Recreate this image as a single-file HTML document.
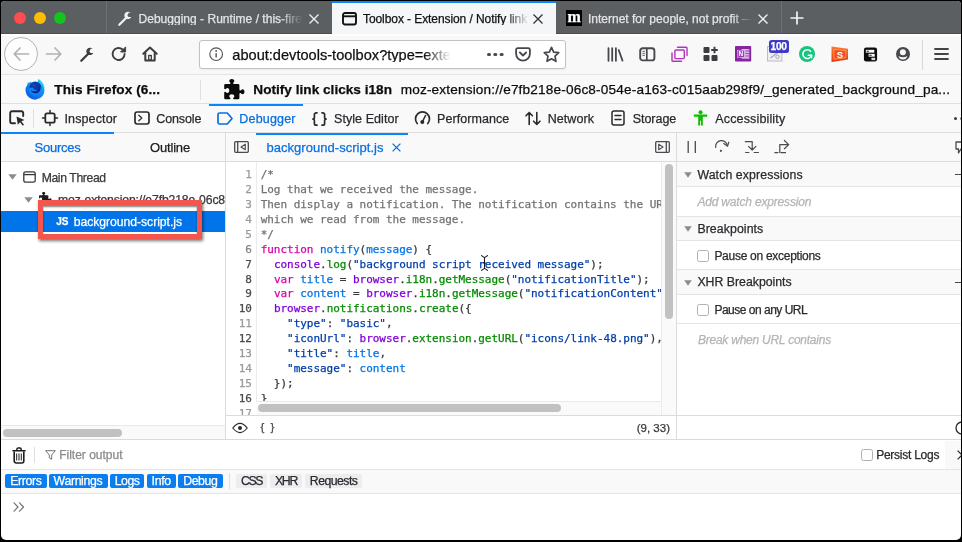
<!DOCTYPE html><html lang="en"><head>
<meta charset="utf-8">
<title>Toolbox - Extension / Notify link clicks i18n</title>
<style>
*{box-sizing:border-box;margin:0;padding:0}
html,body{width:962px;height:542px;overflow:hidden;background:#000}
body{font-family:"Liberation Sans","DejaVu Sans",sans-serif;font-size:12px;color:#222;position:relative}
.a{position:absolute}
.t{position:absolute;white-space:nowrap;line-height:1;-webkit-text-stroke:0.250px}
#win{position:absolute;left:1.200px;top:1px;width:959.400px;height:539.400px;background:#fff;overflow:hidden;border-radius:4px 4px 5px 5px}
/* all children positioned in window coordinates (offset -1,-1 from page) */
#w{position:absolute;left:-1.200px;top:-1px;width:962px;height:542px;will-change:transform}
svg{position:absolute;overflow:visible}
.mono{font-family:"DejaVu Sans Mono","Liberation Mono",monospace}
</style>
</head>
<body>
<div id="win"><div id="w">

<!-- ============ TAB BAR ============ -->
<div class="a" id="tabbar" style="left:0;top:0;width:962px;height:34px;background:#5b5f62"></div>
<div class="a" style="left:14.200px;top:12px;width:12.200px;height:12.200px;border-radius:50%;background:#fc4e50"></div>
<div class="a" style="left:34.200px;top:12px;width:12.200px;height:12.200px;border-radius:50%;background:#fdbc08"></div>
<div class="a" style="left:54.200px;top:12px;width:12.200px;height:12.200px;border-radius:50%;background:#12c41d"></div>
<div class="a" style="left:106px;top:1px;width:1px;height:33px;background:#6f7276"></div>
<!-- tab 1 -->
<svg style="left:116.500px;top:11px" width="16" height="16" viewBox="0 0 16 16"><path d="M2.300 13.700L9.300 6.700" stroke="#f0f0f1" stroke-width="2.300" stroke-linecap="round"></path><path d="M13.400 1.600A3.700 3.700 0 1 0 14.500 5.600L11.800 5.900L10.300 4.300L11.500 1.500z" fill="#f0f0f1" transform="rotate(8 11 4.500)"></path></svg>
<div class="t" id="tab1t" style="left:138.500px;top:13px;font-size:12px;letter-spacing:0.020px;color:#e4e4e6;width:164px;overflow:hidden;-webkit-mask-image:linear-gradient(90deg,#000 86%,transparent 100%)">Debugging - Runtime / this-firefox</div>
<svg style="left:309px;top:14px" width="10" height="10" viewBox="0 0 10 10"><path d="M0.500 0.500L9.500 9.500M9.500 0.500L0.500 9.500" stroke="#eee" stroke-width="1.4" fill="none"></path></svg>
<!-- active tab -->
<div class="a" style="left:332px;top:1px;width:224px;height:33px;background:#f5f6f7"></div>
<div class="a" style="left:332px;top:1px;width:224px;height:2px;background:#0a84ff"></div>
<svg style="left:341.500px;top:11.500px" width="15" height="14" viewBox="0 0 15 14"><rect x="1" y="1" width="13" height="11.500" rx="2" fill="none" stroke="#111" stroke-width="1.900"></rect><path d="M1 4.300H14" stroke="#111" stroke-width="1.900"></path></svg>
<div class="t" id="tab2t" style="left:363px;top:13px;font-size:12px;letter-spacing:-0.080px;color:#111;width:166px;overflow:hidden;-webkit-mask-image:linear-gradient(90deg,#000 86%,transparent 100%)">Toolbox - Extension / Notify link clicks</div>
<svg style="left:533px;top:14px" width="10" height="10" viewBox="0 0 10 10"><path d="M0.500 0.500L9.500 9.500M9.500 0.500L0.500 9.500" stroke="#333" stroke-width="1.300" fill="none"></path></svg>
<!-- tab 3 -->
<div class="a" style="left:566px;top:10px;width:16px;height:16px;background:#000"></div>
<div class="t" style="left:567.600px;top:9.300px;font-size:16px;font-weight:bold;color:#fff;font-family:'Liberation Serif','DejaVu Serif',serif">m</div>
<div class="t" id="tab3t" style="left:588px;top:13px;font-size:12px;letter-spacing:0px;color:#e4e4e6;width:164px;overflow:hidden;-webkit-mask-image:linear-gradient(90deg,#000 88%,transparent 100%)">Internet for people, not profit — Mozilla</div>
<svg style="left:758px;top:14px" width="10" height="10" viewBox="0 0 10 10"><path d="M0.500 0.500L9.500 9.500M9.500 0.500L0.500 9.500" stroke="#eee" stroke-width="1.400" fill="none"></path></svg>
<div class="a" style="left:781px;top:1px;width:1px;height:33px;background:#6f7276"></div>
<svg style="left:790px;top:11px" width="14" height="14" viewBox="0 0 14 14"><path d="M7 0.500V13.500M0.500 7H13.500" stroke="#f4f4f4" stroke-width="1.700" fill="none"></path></svg>

<!-- ============ NAV BAR ============ -->
<div class="a" style="left:0;top:33px;width:332px;height:1px;background:#4d5053"></div><div class="a" style="left:556px;top:33px;width:406px;height:1px;background:#4d5053"></div>
<div class="a" id="navbar" style="left:0;top:34px;width:962px;height:40px;background:#f8f8f9"></div>
<div class="a" style="left:0;top:34px;width:962px;height:1.500px;background:#fff"></div>
<div class="a" style="left:0;top:74px;width:962px;height:1px;background:#e3e3e4"></div>

<!-- ============ THIS FIREFOX BAR ============ -->
<div class="a" id="ffbar" style="left:0;top:75px;width:962px;height:29px;background:#f9f9fa"></div>

<!-- ============ DEVTOOLS TOOLBAR ============ -->
<div class="a" id="dtbar" style="left:0;top:103.400px;width:962px;height:28.600px;background:#f9f9fa;border-top:1px solid #e0e0e2"></div>
<div class="a" style="left:0;top:132px;width:962px;height:1px;background:#dcdcde"></div>

<!-- back button -->
<div class="a" style="left:4.200px;top:36.800px;width:33.800px;height:33.800px;border-radius:50%;background:#fdfdfd;border:1px solid #b4b4b7"></div>
<svg style="left:13px;top:47px" width="16" height="14" viewBox="0 0 16 14"><path d="M7 1L1.200 7L7 13M1.500 7H15.500" stroke="#b1b1b3" stroke-width="1.700" fill="none" stroke-linecap="round" stroke-linejoin="round"></path></svg>
<svg style="left:46px;top:47px" width="16" height="14" viewBox="0 0 16 14"><path d="M9 1L14.800 7L9 13M14.500 7H0.500" stroke="#b1b1b3" stroke-width="1.700" fill="none" stroke-linecap="round" stroke-linejoin="round"></path></svg>
<!-- wrench -->
<svg style="left:78.500px;top:46.500px" width="16" height="16" viewBox="0 0 16 16"><path d="M2.300 13.700L9.300 6.700" stroke="#3d3d40" stroke-width="2.300" stroke-linecap="round"></path><path d="M13.400 1.600A3.700 3.700 0 1 0 14.500 5.600L11.800 5.900L10.300 4.300L11.500 1.500z" fill="#3d3d40" transform="rotate(8 11 4.500)"></path></svg>
<!-- reload -->
<svg style="left:110.800px;top:46px" width="16" height="15" viewBox="0 0 16 15"><path d="M13.600 8A6 6 0 1 1 11.300 3.300" stroke="#3d3d40" stroke-width="1.900" fill="none" stroke-linecap="round"></path><path d="M14.600 0.900V6H9.500z" fill="#3d3d40" stroke="#3d3d40" stroke-width="0.900" stroke-linejoin="round"></path></svg>
<!-- home -->
<svg style="left:142.300px;top:45.800px" width="16" height="16" viewBox="0 0 16 16"><path d="M1.300 7.800L8 1.500L14.700 7.800" stroke="#3d3d40" stroke-width="2" fill="none" stroke-linecap="round" stroke-linejoin="round"></path><path d="M3.300 7V14.600H12.700V7" stroke="#3d3d40" stroke-width="2" fill="none" stroke-linecap="round" stroke-linejoin="round"></path><rect x="6.700" y="9.500" width="2.600" height="4.500" fill="none" stroke="#3d3d40" stroke-width="1.300"></rect></svg>
<!-- url bar -->
<div class="a" style="left:199px;top:39.500px;width:367px;height:29px;background:#fff;border:1px solid #c2c2c5;border-radius:3px;box-shadow:0 1px 2px rgba(0,0,0,.06)"></div>
<svg style="left:208.800px;top:47.300px" width="14.300" height="14.300" viewBox="0 0 14 14"><circle cx="7" cy="7" r="6.200" fill="none" stroke="#555" stroke-width="1.100"></circle><path d="M7 6V10.300" stroke="#555" stroke-width="1.400"></path><circle cx="7" cy="3.900" r="0.900" fill="#555"></circle></svg>
<div class="t" id="urlt" style="left:232.300px;top:47.800px;font-size:14.600px;color:#111;width:221px;overflow:hidden;-webkit-mask-image:linear-gradient(90deg,#000 87%,transparent 99%)">about:devtools-toolbox?type=extension</div>
<div class="a" style="left:487px;top:52.700px;width:3.600px;height:3.600px;border-radius:50%;background:#4a4a4f;box-shadow:6.300px 0 0 #4a4a4f,12.600px 0 0 #4a4a4f"></div>
<!-- pocket -->
<svg style="left:515px;top:46.800px" width="16" height="15" viewBox="0 0 16 15"><path d="M2.800 1.200H13.200A1.700 1.700 0 0 1 14.900 2.900V6.800A6.900 6.900 0 0 1 1.100 6.800V2.900A1.700 1.700 0 0 1 2.800 1.200z" fill="none" stroke="#48484c" stroke-width="1.800"></path><path d="M4.900 5.500L8 8.500L11.100 5.500" stroke="#48484c" stroke-width="1.800" fill="none" stroke-linecap="round" stroke-linejoin="round"></path></svg>
<!-- star -->
<svg style="left:542.700px;top:45.800px" width="17" height="17" viewBox="0 0 16 16"><path d="M8 1.300L10.050 5.700L14.800 6.300L11.300 9.600L12.200 14.400L8 12L3.800 14.400L4.700 9.600L1.200 6.300L5.950 5.700z" fill="none" stroke="#48484c" stroke-width="1.600" stroke-linejoin="round"></path></svg>
<!-- library -->
<svg style="left:607px;top:46.500px" width="17" height="15" viewBox="0 0 17 15"><path d="M1.500 1.200V13.800M5.200 1.200V13.800M8.900 1.200V13.800" stroke="#48484c" stroke-width="1.800" stroke-linecap="round"></path><path d="M11.700 3L15.500 13.600" stroke="#48484c" stroke-width="1.800" stroke-linecap="round"></path></svg>
<!-- sidebar -->
<svg style="left:638.500px;top:46.700px" width="17" height="15" viewBox="0 0 17 15"><rect x="1.200" y="1.200" width="14.200" height="12.200" rx="2.500" fill="none" stroke="#48484c" stroke-width="1.900"></rect><path d="M7.800 1.200V13.400" stroke="#48484c" stroke-width="1.700"></path><path d="M3.500 4.300H5.800M3.500 6.300H5.800M3.500 8.300H5.800" stroke="#48484c" stroke-width="0.900"></path></svg>
<!-- containers (purple) -->
<svg style="left:670.500px;top:46px" width="17" height="16" viewBox="0 0 17 16"><rect x="3.900" y="4" width="9.400" height="8.600" rx="1" fill="none" stroke="#b234bb" stroke-width="1.400"></rect><path d="M6.500 1.200H15.200A0.800 0.800 0 0 1 16 2V9.500" fill="none" stroke="#b234bb" stroke-width="1.400" stroke-linecap="round"></path><path d="M1 7V14.400A0.800 0.800 0 0 0 1.800 15.200H10.500" fill="none" stroke="#b234bb" stroke-width="1.400" stroke-linecap="round"></path></svg>
<!-- grid + -->
<svg style="left:703px;top:46px" width="16" height="16" viewBox="0 0 16 16"><rect x="0.500" y="1" width="6" height="6" rx="1" fill="#3d3d40"></rect><rect x="0.500" y="9" width="6" height="6" rx="1" fill="#3d3d40"></rect><rect x="8.500" y="9" width="6" height="6" rx="1" fill="#3d3d40"></rect><path d="M11.500 0.700V7.300M8.200 4H14.800" stroke="#3d3d40" stroke-width="1.900"></path></svg>
<!-- onenote -->
<svg style="left:734.800px;top:46.300px" width="16.200" height="15.600" viewBox="0 0 16.200 15.600"><rect x="0" y="0" width="16.200" height="15.600" rx="0.800" fill="#84269f"></rect><rect x="6.500" y="3" width="7.800" height="9.800" rx="0.600" fill="#d9b3e6"></rect><path d="M10.500 5H14.300M10.500 7.500H14.300M10.500 10H14.300" stroke="#84269f" stroke-width="0.700"></path><rect x="2.300" y="4.200" width="7" height="7.200" fill="#9b3db8" stroke="#e8cdf1" stroke-width="0.500"></rect><text x="5.800" y="10.200" font-size="6.500" font-weight="bold" fill="#fff" text-anchor="middle" font-family="Liberation Sans, sans-serif">N</text></svg>
<!-- 100 badge -->
<svg style="left:767.200px;top:46.300px" width="15.400" height="15.500" viewBox="0 0 15.400 15.500"><rect x="0.500" y="0.500" width="14.400" height="14.500" fill="#efeff1" stroke="#bdbdc1" stroke-width="1"></rect><path d="M3.500 12L12 5.500" stroke="#a8a8ac" stroke-width="1.200"></path><circle cx="10.500" cy="10.800" r="1.700" fill="none" stroke="#a8a8ac" stroke-width="1"></circle></svg>
<div class="a" style="left:768.700px;top:40.100px;width:20px;height:12.500px;border-radius:2.500px;background:#3d3ac6"></div>
<div class="t" style="left:770.600px;top:41.600px;font-size:10.200px;font-weight:bold;color:#fff;letter-spacing:-0.300px">100</div>
<!-- grammarly -->
<div class="a" style="left:798.700px;top:45.500px;width:16.300px;height:16.300px;border-radius:50%;background:#15c47e"></div>
<svg style="left:798.700px;top:45.500px" width="16.300" height="16.300" viewBox="0 0 16 16"><path d="M11.500 5.300A4.300 4.300 0 1 0 12.300 9" stroke="#fff" stroke-width="1.500" fill="none" stroke-linecap="round"></path><path d="M9 9H12.400V11.500" stroke="#fff" stroke-width="1.400" fill="none" stroke-linecap="round" stroke-linejoin="round"></path></svg>
<!-- S orange -->
<svg style="left:830.500px;top:45.500px" width="17.500" height="16.500" viewBox="0 0 17.500 16.500"><defs><linearGradient id="og" x1="0" y1="0" x2="0" y2="1"><stop offset="0" stop-color="#ff7b2e"></stop><stop offset="1" stop-color="#e2330a"></stop></linearGradient></defs><path d="M0.500 0.500L17 2.800V13.500L0.500 16z" fill="url(#og)"></path><path d="M2.800 3.300L14.800 4.600V11.800L2.800 13.300z" fill="#f4511e" stroke="#ffb27a" stroke-width="0.700"></path><text x="8.800" y="12" font-size="9.500" font-weight="bold" fill="#fff" text-anchor="middle" font-family="Liberation Sans, sans-serif">S</text></svg>
<!-- black box -->
<svg style="left:863.300px;top:46.500px" width="15" height="15" viewBox="0 0 15 16"><rect x="0.500" y="0.500" width="14" height="15" rx="2.500" fill="#0c0c0d"></rect><rect x="2.500" y="3" width="9" height="3" fill="#fff"></rect><rect x="5.500" y="7.300" width="6.500" height="3" fill="#fff"></rect><rect x="8.500" y="11.500" width="4" height="2.500" fill="#ddd"></rect><rect x="3.300" y="4" width="2.500" height="1" fill="#0c0c0d"></rect><rect x="6.300" y="8.300" width="2.500" height="1" fill="#0c0c0d"></rect></svg>
<!-- account -->
<svg style="left:896.100px;top:47px" width="14" height="14" viewBox="0 0 14 14"><circle cx="7" cy="7" r="7" fill="#48484c"></circle><circle cx="6.900" cy="5.300" r="3" fill="#f8f8f9"></circle><path d="M2.500 9Q6.900 11.400 11.300 9Q10.600 12.500 6.900 12.600Q3.200 12.500 2.500 9z" fill="#f8f8f9"></path></svg>
<div class="a" style="left:922px;top:40px;width:1px;height:30px;background:#d8d8da"></div>
<svg style="left:934px;top:47px" width="15" height="14" viewBox="0 0 15 14"><path d="M1 2H14M1 7H14M1 12H14" stroke="#444" stroke-width="1.800" stroke-linecap="round"></path></svg>
<!--SECTION:NAV-END-->

<!-- firefox logo -->
<svg style="left:26px;top:78.300px" width="20" height="21" viewBox="0 0 20 21"><defs><linearGradient id="fg" x1="0.850" y1="0.050" x2="0.200" y2="0.950"><stop offset="0" stop-color="#14c8fa"></stop><stop offset="0.400" stop-color="#1090f6"></stop><stop offset="1" stop-color="#0a5be0"></stop></linearGradient><radialGradient id="gg" cx="0.450" cy="0.300" r="0.750"><stop offset="0" stop-color="#1240b8"></stop><stop offset="1" stop-color="#09227e"></stop></radialGradient></defs><path d="M12.500 1L14.800 4.600A9.500 9.500 0 1 1 1.600 6.200L1.700 4.200L3.100 5.200L3.900 3.700L5.400 4.400A9.500 9.500 0 0 1 11.600 3.900z" fill="url(#fg)"></path><circle cx="9.400" cy="9.600" r="5.900" fill="url(#gg)"></circle><path d="M2.800 10.500Q5.400 8.700 8.400 9.900L7.200 11Q8.800 12.100 11.300 11.400Q10.800 13.200 8.200 13.300Q5.600 13.200 5 12Q5.200 14.800 8.500 15.600Q12.600 15.800 14.200 12Q14.900 9.800 14.200 7.600Q16.800 11.800 14 15.400Q10.800 18.600 6.400 17Q2.400 14.800 2.800 10.500z" fill="#1383f3"></path><path d="M12.500 1Q17.500 4 18.800 10.600Q17.200 6.800 14.200 5.400Q12.600 3.600 12.500 1z" fill="#1fd0fb"></path><path d="M6.400 6.300L8.600 7.200L7.600 7.900z" fill="#1a6fe6"></path></svg>
<div class="t" style="left: 54.3px; top: 82.8px; font-size: 13.6px; font-weight: bold; color: rgb(12, 12, 13); letter-spacing: 0.081px;">This Firefox (6...</div>
<div class="a" style="left:200px;top:80px;width:1px;height:20px;background:#e0e0e2"></div>
<!-- puzzle -->
<svg style="left:224.200px;top:79px" width="20.700" height="20.300" viewBox="0 0 16 16"><path d="M14.5 8c-.971 0-1 1-1.75 1a.765.765 0 0 1-.75-.75V5a1 1 0 0 0-1-1H7.75A.765.765 0 0 1 7 3.250c0-.75 1-.779 1-1.750C8 .635 7.100 0 6 0S4 .635 4 1.500c0 .971 1 1 1 1.750a.765.765 0 0 1-.750.750H1a1 1 0 0 0-1 1v2.250A.765.765 0 0 0 .750 8c.750 0 .779-1 1.750-1C3.365 7 4 7.900 4 9s-.635 2-1.500 2c-.971 0-1-1-1.750-1a.765.765 0 0 0-.750.750V15a1 1 0 0 0 1 1h3.250a.765.765 0 0 0 .750-.750c0-.750-1-.779-1-1.750 0-.865.900-1.500 2-1.500s2 .635 2 1.500c0 .971-1 1-1 1.750a.765.765 0 0 0 .750.750H11a1 1 0 0 0 1-1v-3.250a.765.765 0 0 1 .750-.750c.750 0 .779 1 1.750 1 .865 0 1.500-.900 1.500-2s-.635-2-1.500-2z" fill="#0c0c0d"></path></svg>
<div class="t" style="left: 253.3px; top: 82.8px; font-size: 13.6px; font-weight: bold; color: rgb(12, 12, 13); letter-spacing: 0.019px;">Notify link clicks i18n</div>
<div class="t" style="left: 400.7px; top: 82.8px; font-size: 13.6px; color: rgb(12, 12, 13); letter-spacing: 0.171px;">moz-extension://e7fb218e-06c8-054e-a163-c015aab298f9/_generated_background_pa...</div>


<!-- picker -->
<svg style="left:9px;top:110px" width="17" height="17" viewBox="0 0 17 17"><path d="M14.200 6V3A1.800 1.800 0 0 0 12.400 1.200H3A1.800 1.800 0 0 0 1.200 3V11.400A1.800 1.800 0 0 0 3 13.200H6" fill="none" stroke="#2a2a2e" stroke-width="1.900" stroke-linecap="round"></path><path d="M7.500 6.500L15.500 10L12.300 11.300L15 14.800L13.800 15.800L11 12.300L8.800 14.800z" fill="#2a2a2e"></path></svg>
<div class="a" style="left:33px;top:109px;width:1px;height:19px;background:#dedee0"></div>
<!-- inspector icon -->
<svg style="left:42px;top:110px" width="16" height="16" viewBox="0 0 16 16"><rect x="3.300" y="3.300" width="9.400" height="9.400" rx="1.800" fill="none" stroke="#2a2a2e" stroke-width="1.800"></rect><path d="M8 0.500V3.300M8 12.700V15.500M0.500 8H3.300M12.700 8H15.500" stroke="#2a2a2e" stroke-width="1.500" stroke-linecap="round"></path></svg>
<div class="t" style="left: 64.5px; top: 113px; font-size: 12.5px; color: rgb(42, 42, 46); letter-spacing: 0.12px;">Inspector</div>
<!-- console icon -->
<svg style="left:134px;top:111px" width="16" height="14" viewBox="0 0 16 14"><rect x="1" y="1" width="14" height="12" rx="2.200" fill="none" stroke="#2a2a2e" stroke-width="1.700"></rect><path d="M4.800 4.300L7.800 7L4.800 9.700" fill="none" stroke="#2a2a2e" stroke-width="1.300" stroke-linecap="round" stroke-linejoin="round"></path></svg>
<div class="t" style="left: 156.3px; top: 113px; font-size: 12.5px; color: rgb(42, 42, 46); letter-spacing: -0.125px;">Console</div>
<!-- debugger selected -->
<div class="a" style="left:209px;top:104px;width:94px;height:2px;background:#0a84ff"></div>
<svg style="left:217px;top:112px" width="16" height="13" viewBox="0 0 16 13"><path d="M2.500 1H10.300L15 6.500L10.300 12H2.500A1.500 1.500 0 0 1 1 10.500V2.500A1.500 1.500 0 0 1 2.500 1z" fill="none" stroke="#0a6fe0" stroke-width="1.700" stroke-linejoin="round"></path></svg>
<div class="t" style="left: 239.3px; top: 113px; font-size: 12.5px; color: rgb(10, 111, 224); letter-spacing: 0.187px;">Debugger</div>
<!-- style editor -->
<svg style="left:312px;top:111.500px" width="15" height="14" viewBox="0 0 15 14"><path d="M5 0.800H4.200A1.800 1.800 0 0 0 2.400 2.600V5.200Q2.400 7 0.800 7Q2.400 7 2.400 8.800V11.400A1.800 1.800 0 0 0 4.200 13.200H5M10 0.800H10.800A1.800 1.800 0 0 1 12.600 2.600V5.200Q12.600 7 14.200 7Q12.600 7 12.600 8.800V11.400A1.800 1.800 0 0 1 10.800 13.200H10" fill="none" stroke="#2a2a2e" stroke-width="1.700" stroke-linecap="round" stroke-linejoin="round"></path></svg>
<div class="t" style="left: 334px; top: 113px; font-size: 12.5px; color: rgb(42, 42, 46); letter-spacing: 0.065px;">Style Editor</div>
<!-- performance -->
<svg style="left:414px;top:110px" width="17" height="16" viewBox="0 0 17 16"><path d="M3.200 13.500A7 7 0 1 1 13.800 13.500" fill="none" stroke="#2a2a2e" stroke-width="1.700" stroke-linecap="round"></path><path d="M8.500 11.500L11.500 5.500" stroke="#2a2a2e" stroke-width="1.600" stroke-linecap="round"></path><circle cx="8.300" cy="12" r="2" fill="#2a2a2e"></circle></svg>
<div class="t" style="left: 437px; top: 113px; font-size: 12.5px; color: rgb(42, 42, 46); letter-spacing: 0.067px;">Performance</div>
<!-- network -->
<svg style="left:525px;top:111px" width="16" height="15" viewBox="0 0 16 15"><path d="M4.200 13.500V1.500M1 4.800L4.200 1.500L7.400 4.800M11.800 1.500V13.500M8.600 10.200L11.800 13.500L15 10.200" fill="none" stroke="#2a2a2e" stroke-width="1.600" stroke-linecap="round" stroke-linejoin="round"></path></svg>
<div class="t" style="left: 547.7px; top: 113px; font-size: 12.5px; color: rgb(42, 42, 46); letter-spacing: 0.065px;">Network</div>
<!-- storage -->
<svg style="left:611px;top:110px" width="14" height="16" viewBox="0 0 14 16"><rect x="1" y="1" width="12" height="14" rx="2" fill="none" stroke="#2a2a2e" stroke-width="1.500"></rect><path d="M4 5.500H10M4 9.500H10" stroke="#2a2a2e" stroke-width="1.400" stroke-linecap="round"></path></svg>
<div class="t" style="left: 632.7px; top: 113px; font-size: 12.5px; color: rgb(42, 42, 46); letter-spacing: -0.026px;">Storage</div>
<!-- accessibility -->
<svg style="left:693px;top:110px" width="15" height="16" viewBox="0 0 15 16"><circle cx="7.500" cy="2.200" r="2" fill="#12bc00"></circle><path d="M0.800 4.600H14.200V6.800H9.800V15.500H7.900V10.800H7.100V15.500H5.200V6.800H0.800z" fill="#12bc00"></path></svg>
<div class="t" style="left: 715.3px; top: 113px; font-size: 12.5px; color: rgb(42, 42, 46); letter-spacing: 0.148px;">Accessibility</div>
<div class="a" style="left:953.600px;top:116.600px;width:3.600px;height:3.600px;border-radius:50%;background:#3a3a3e;box-shadow:6.300px 0 0 #3a3a3e,12.600px 0 0 #3a3a3e"></div>

<!-- ============ SOURCES PANEL ============ -->
<div class="a" style="left:0;top:133px;width:226px;height:28px;background:#f9f9fa"></div>
<div class="a" style="left:0;top:132px;width:114px;height:2px;background:#0a84ff"></div>
<div class="t" style="left: 34.5px; top: 141px; font-size: 13px; color: rgb(10, 111, 224); letter-spacing: -0.243px;">Sources</div>
<div class="t" style="left: 150px; top: 141px; font-size: 13px; color: rgb(28, 28, 30); letter-spacing: -0.172px;">Outline</div>
<div class="a" style="left:0;top:161px;width:962px;height:1px;background:#dcdcde"></div>
<div class="a" style="left:225px;top:133px;width:1px;height:307px;background:#dcdcde"></div>
<!-- tree -->
<svg style="left:8px;top:174px" width="9" height="6" viewBox="0 0 9 6"><path d="M0.300 0.300H8.700L4.500 5.700z" fill="#8c8c90"></path></svg>
<svg style="left:23px;top:171px" width="13" height="12" viewBox="0 0 13 12"><rect x="0.800" y="0.800" width="11.400" height="10.400" rx="1.800" fill="none" stroke="#38383d" stroke-width="1.300"></rect><path d="M0.800 3.600H12.200" stroke="#38383d" stroke-width="1.300"></path></svg>
<div class="t" style="left: 41.7px; top: 171.8px; font-size: 12.2px; color: rgb(56, 56, 61); letter-spacing: -0.382px;">Main Thread</div>
<svg style="left:24px;top:196.500px" width="9" height="6" viewBox="0 0 9 6"><path d="M0.300 0.300H8.700L4.500 5.700z" fill="#8c8c90"></path></svg>
<svg style="left:38.700px;top:192px" width="12.500" height="12.500" viewBox="0 0 16 16"><path d="M14.5 8c-.971 0-1 1-1.75 1a.765.765 0 0 1-.75-.75V5a1 1 0 0 0-1-1H7.75A.765.765 0 0 1 7 3.250c0-.75 1-.779 1-1.750C8 .635 7.100 0 6 0S4 .635 4 1.500c0 .971 1 1 1 1.750a.765.765 0 0 1-.750.750H1a1 1 0 0 0-1 1v2.250A.765.765 0 0 0 .750 8c.750 0 .779-1 1.750-1C3.365 7 4 7.900 4 9s-.635 2-1.500 2c-.971 0-1-1-1.750-1a.765.765 0 0 0-.750.750V15a1 1 0 0 0 1 1h3.250a.765.765 0 0 0 .750-.750c0-.750-1-.779-1-1.750 0-.865.900-1.500 2-1.500s2 .635 2 1.500c0 .971-1 1-1 1.750a.765.765 0 0 0 .750.750H11a1 1 0 0 0 1-1v-3.250a.765.765 0 0 1 .750-.750c.750 0 .779 1 1.750 1 .865 0 1.500-.900 1.500-2s-.635-2-1.500-2z" fill="#1c1c1e"></path></svg>
<div class="a" style="left:58px;top:190px;width:167px;height:18px;overflow:hidden"><div class="t" style="left: 0px; top: 3.8px; font-size: 12.2px; color: rgb(56, 56, 61); letter-spacing: -0.129px;">moz-extension://e7fb218e-06c8</div></div>
<!-- selected row -->
<div class="a" style="left:0;top:210.500px;width:225px;height:21.400px;background:#0074e8"></div>
<div class="t" style="left:56.300px;top:217px;font-size:10px;font-weight:bold;color:#fff;letter-spacing:-0.100px">JS</div>
<div class="t" style="left: 73.7px; top: 216.1px; font-size: 12.2px; color: rgb(255, 255, 255); letter-spacing: -0.038px;">background-script.js</div>
<!-- red annotation box -->
<div class="a" style="left:38px;top:200px;width:164px;height:39px;border:5px solid #f2564c;box-shadow:1px 2px 3px rgba(0,0,0,.55),inset 0 2px 2px rgba(0,0,0,.5)"></div>
<!-- sources h-scrollbar -->
<div class="a" style="left:0;top:425px;width:225px;height:1px;background:#e8e8e8"></div>
<div class="a" style="left:0;top:426px;width:225px;height:14px;background:#fafafa"></div>
<div class="a" style="left:2.500px;top:429px;width:119px;height:8px;border-radius:4px;background:#c1c1c1"></div>

<!-- ============ EDITOR ============ -->
<div class="a" style="left:226px;top:133px;width:450px;height:28px;background:#f9f9fa"></div>
<div class="a" style="left:256px;top:132.500px;width:152px;height:2px;background:#0a84ff"></div>
<svg style="left:234px;top:141px" width="15" height="12" viewBox="0 0 15 12"><rect x="0.700" y="0.700" width="13.600" height="10.600" rx="1" fill="none" stroke="#4a4a4f" stroke-width="1.300"></rect><path d="M3.700 0.700V11.300" stroke="#4a4a4f" stroke-width="1.300"></path><path d="M11.300 3.200V8.800L7 6z" fill="none" stroke="#4a4a4f" stroke-width="1.100" stroke-linejoin="round"></path></svg>
<div class="t" style="left: 266.5px; top: 141px; font-size: 13px; color: rgb(10, 111, 224); letter-spacing: 0.034px;">background-script.js</div>
<svg style="left:391.500px;top:143px" width="9" height="9" viewBox="0 0 9 9"><path d="M0.600 0.600L8.400 8.400M8.400 0.600L0.600 8.400" stroke="#0a6fe0" stroke-width="1.300" fill="none"></path></svg>
<svg style="left:655px;top:141px" width="15" height="12" viewBox="0 0 15 12"><rect x="0.700" y="0.700" width="13.600" height="10.600" rx="1" fill="none" stroke="#4a4a4f" stroke-width="1.300"></rect><path d="M11.300 0.700V11.300" stroke="#4a4a4f" stroke-width="1.300"></path><path d="M3.700 3.200V8.800L8 6z" fill="none" stroke="#4a4a4f" stroke-width="1.100" stroke-linejoin="round"></path></svg>
<div class="a mono" id="code" style="left:226px;top:162px;width:435.300px;height:253px;overflow:hidden;background:#fff;font-size:11px;letter-spacing:-0.030px">
<div class="a" style="left:29.500px;top:0;width:1px;height:253px;background:#ececee"></div>
<div class="t" style="left:0;width:25.500px;text-align:right;top:6.04px;height:14.93px;line-height:14.93px;color:#9a9a9e;letter-spacing:-0.300px">1</div>
<div class="t" style="left:34.700px;top:6.04px;height:14.93px;line-height:14.93px;white-space:pre"><span style="color:#737373">/*</span></div>
<div class="t" style="left:0;width:25.500px;text-align:right;top:20.97px;height:14.93px;line-height:14.93px;color:#9a9a9e;letter-spacing:-0.300px">2</div>
<div class="t" style="left:34.700px;top:20.97px;height:14.93px;line-height:14.93px;white-space:pre"><span style="color:#737373">Log that we received the message.</span></div>
<div class="t" style="left:0;width:25.500px;text-align:right;top:35.90px;height:14.93px;line-height:14.93px;color:#9a9a9e;letter-spacing:-0.300px">3</div>
<div class="t" style="left:34.700px;top:35.90px;height:14.93px;line-height:14.93px;white-space:pre"><span style="color:#737373">Then display a notification. The notification contains the URL,</span></div>
<div class="t" style="left:0;width:25.500px;text-align:right;top:50.82px;height:14.93px;line-height:14.93px;color:#9a9a9e;letter-spacing:-0.300px">4</div>
<div class="t" style="left:34.700px;top:50.82px;height:14.93px;line-height:14.93px;white-space:pre"><span style="color:#737373">which we read from the message.</span></div>
<div class="t" style="left:0;width:25.500px;text-align:right;top:65.76px;height:14.93px;line-height:14.93px;color:#9a9a9e;letter-spacing:-0.300px">5</div>
<div class="t" style="left:34.700px;top:65.76px;height:14.93px;line-height:14.93px;white-space:pre"><span style="color:#737373">*/</span></div>
<div class="t" style="left:0;width:25.500px;text-align:right;top:80.69px;height:14.93px;line-height:14.93px;color:#85858a;letter-spacing:-0.300px">6</div>
<div class="t" style="left:34.700px;top:80.69px;height:14.93px;line-height:14.93px;white-space:pre"><span style="color:#dd00a9">function</span><span style="color:#38383d"> </span><span style="color:#0074e8">notify</span><span style="color:#38383d">(</span><span style="color:#0074e8">message</span><span style="color:#38383d">) {</span></div>
<div class="t" style="left:0;width:25.500px;text-align:right;top:95.61px;height:14.93px;line-height:14.93px;color:#4a4a4f;letter-spacing:-0.300px">7</div>
<div class="t" style="left:34.700px;top:95.61px;height:14.93px;line-height:14.93px;white-space:pre"><span style="color:#38383d">  </span><span style="color:#8000d7">console</span><span style="color:#38383d">.</span><span style="color:#058b00">log</span><span style="color:#38383d">(</span><span style="color:#003eaa">"background script received message"</span><span style="color:#38383d">);</span></div>
<div class="t" style="left:0;width:25.500px;text-align:right;top:110.54px;height:14.93px;line-height:14.93px;color:#4a4a4f;letter-spacing:-0.300px">8</div>
<div class="t" style="left:34.700px;top:110.54px;height:14.93px;line-height:14.93px;white-space:pre"><span style="color:#38383d">  </span><span style="color:#dd00a9">var</span><span style="color:#38383d"> </span><span style="color:#0074e8">title</span><span style="color:#38383d"> = </span><span style="color:#8000d7">browser</span><span style="color:#38383d">.</span><span style="color:#058b00">i18n</span><span style="color:#38383d">.</span><span style="color:#058b00">getMessage</span><span style="color:#38383d">(</span><span style="color:#003eaa">"notificationTitle"</span><span style="color:#38383d">);</span></div>
<div class="t" style="left:0;width:25.500px;text-align:right;top:125.48px;height:14.93px;line-height:14.93px;color:#4a4a4f;letter-spacing:-0.300px">9</div>
<div class="t" style="left:34.700px;top:125.48px;height:14.93px;line-height:14.93px;white-space:pre"><span style="color:#38383d">  </span><span style="color:#dd00a9">var</span><span style="color:#38383d"> </span><span style="color:#0074e8">content</span><span style="color:#38383d"> = </span><span style="color:#8000d7">browser</span><span style="color:#38383d">.</span><span style="color:#058b00">i18n</span><span style="color:#38383d">.</span><span style="color:#058b00">getMessage</span><span style="color:#38383d">(</span><span style="color:#003eaa">"notificationContent"</span><span style="color:#38383d">);</span></div>
<div class="t" style="left:0;width:25.500px;text-align:right;top:140.41px;height:14.93px;line-height:14.93px;color:#4a4a4f;letter-spacing:-0.300px">10</div>
<div class="t" style="left:34.700px;top:140.41px;height:14.93px;line-height:14.93px;white-space:pre"><span style="color:#38383d">  </span><span style="color:#8000d7">browser</span><span style="color:#38383d">.</span><span style="color:#058b00">notifications</span><span style="color:#38383d">.</span><span style="color:#058b00">create</span><span style="color:#38383d">({</span></div>
<div class="t" style="left:0;width:25.500px;text-align:right;top:155.34px;height:14.93px;line-height:14.93px;color:#9a9a9e;letter-spacing:-0.300px">11</div>
<div class="t" style="left:34.700px;top:155.34px;height:14.93px;line-height:14.93px;white-space:pre"><span style="color:#38383d">    </span><span style="color:#003eaa">"type"</span><span style="color:#38383d">: </span><span style="color:#003eaa">"basic"</span><span style="color:#38383d">,</span></div>
<div class="t" style="left:0;width:25.500px;text-align:right;top:170.26px;height:14.93px;line-height:14.93px;color:#4a4a4f;letter-spacing:-0.300px">12</div>
<div class="t" style="left:34.700px;top:170.26px;height:14.93px;line-height:14.93px;white-space:pre"><span style="color:#38383d">    </span><span style="color:#003eaa">"iconUrl"</span><span style="color:#38383d">: </span><span style="color:#8000d7">browser</span><span style="color:#38383d">.</span><span style="color:#058b00">extension</span><span style="color:#38383d">.</span><span style="color:#058b00">getURL</span><span style="color:#38383d">(</span><span style="color:#003eaa">"icons/link-48.png"</span><span style="color:#38383d">),</span></div>
<div class="t" style="left:0;width:25.500px;text-align:right;top:185.20px;height:14.93px;line-height:14.93px;color:#9a9a9e;letter-spacing:-0.300px">13</div>
<div class="t" style="left:34.700px;top:185.20px;height:14.93px;line-height:14.93px;white-space:pre"><span style="color:#38383d">    </span><span style="color:#003eaa">"title"</span><span style="color:#38383d">: </span><span style="color:#0074e8">title</span><span style="color:#38383d">,</span></div>
<div class="t" style="left:0;width:25.500px;text-align:right;top:200.12px;height:14.93px;line-height:14.93px;color:#9a9a9e;letter-spacing:-0.300px">14</div>
<div class="t" style="left:34.700px;top:200.12px;height:14.93px;line-height:14.93px;white-space:pre"><span style="color:#38383d">    </span><span style="color:#003eaa">"message"</span><span style="color:#38383d">: </span><span style="color:#0074e8">content</span></div>
<div class="t" style="left:0;width:25.500px;text-align:right;top:215.05px;height:14.93px;line-height:14.93px;color:#9a9a9e;letter-spacing:-0.300px">15</div>
<div class="t" style="left:34.700px;top:215.05px;height:14.93px;line-height:14.93px;white-space:pre"><span style="color:#38383d">  });</span></div>
<div class="t" style="left:0;width:25.500px;text-align:right;top:229.98px;height:14.93px;line-height:14.93px;color:#4a4a4f;letter-spacing:-0.300px">16</div>
<div class="t" style="left:34.700px;top:229.98px;height:14.93px;line-height:14.93px;white-space:pre"><span style="color:#38383d">}</span></div>
<div class="t" style="left:0;width:25.500px;text-align:right;top:244.91px;height:14.93px;line-height:14.93px;color:#9a9a9e;letter-spacing:-0.300px">17</div>
<div class="a" style="left:30px;top:238.500px;width:406px;height:14.500px;background:#fafafa;border-top:1px solid #e9e9e9"></div>
<div class="a" style="left:31.500px;top:242px;width:303.500px;height:7.500px;border-radius:4px;background:#c1c1c1"></div>
</div>
<div class="a" style="left:661.300px;top:162px;width:14.700px;height:253px;background:#fafafa;border-left:1px solid #ececec"></div>
<div class="a" style="left:665px;top:163.500px;width:8px;height:155px;border-radius:4px;background:#c1c1c1"></div>
<div class="a" style="left:676px;top:133px;width:1px;height:307px;background:#dcdcde"></div>
<div class="a" style="left:226px;top:415px;width:736px;height:1px;background:#dcdcde"></div>
<div class="a" style="left:226px;top:416px;width:450px;height:23px;background:#fff"></div>
<svg style="left:232px;top:422px" width="16" height="12" viewBox="0 0 16 12"><path d="M0.800 6Q8 -3.200 15.200 6Q8 15.200 0.800 6z" fill="none" stroke="#2a2a2e" stroke-width="1.200"></path><circle cx="8" cy="6" r="2" fill="#2a2a2e"></circle></svg>
<div class="t" style="left:260.600px;top:422px;font-size:11.500px;color:#4a4a4f;letter-spacing:1.400px">{ }</div>
<div class="t" style="left:600px;width:70px;text-align:right;top:422.500px;font-size:11.500px;color:#38383d">(9, 33)</div>

<!-- text cursor -->
<svg style="left:481px;top:255px" width="7" height="16" viewBox="0 0 7 16"><path d="M0.500 0.600L3.500 2.600L6.500 0.600M3.500 2.600V13.400M0.500 15.400L3.500 13.400L6.500 15.400M2.400 8H4.600" fill="none" stroke="#1a1a1a" stroke-width="1.100" stroke-linecap="round"></path></svg>
<!-- ============ RIGHT PANEL ============ -->
<div class="a" style="left:677px;top:133px;width:285px;height:28px;background:#f9f9fa"></div>
<!-- pause -->
<svg style="left:687px;top:141px" width="10" height="12" viewBox="0 0 10 12"><path d="M1.200 0V12M8.300 0V12" stroke="#4a4a4f" stroke-width="1.300"></path></svg>
<!-- step over -->
<svg style="left:714px;top:140px" width="16" height="14" viewBox="0 0 16 14"><path d="M1.700 7.300A5.800 5.800 0 0 1 13.300 5.600" fill="none" stroke="#4a4a4f" stroke-width="1.200" stroke-linecap="round"></path><path d="M9.800 3.400L13.600 6.200L14.800 2.200" fill="none" stroke="#4a4a4f" stroke-width="1.200" stroke-linecap="round" stroke-linejoin="round"></path><circle cx="6.900" cy="10.800" r="1.100" fill="#4a4a4f"></circle></svg>
<!-- step in -->
<svg style="left:745px;top:140px" width="15" height="14" viewBox="0 0 15 14"><path d="M0.300 1.700H7.200V9.700M3.500 6.300L7.200 10L10.900 6.300" fill="none" stroke="#4a4a4f" stroke-width="1.200" stroke-linecap="round" stroke-linejoin="round"></path><path d="M0.200 12.500H4.300M8.700 12.500H13.900" stroke="#4a4a4f" stroke-width="1.200"></path></svg>
<!-- step out -->
<svg style="left:774px;top:140px" width="16" height="14" viewBox="0 0 16 14"><path d="M5.800 12.400V4.600H14.400M10.400 0.500L14.700 4.600L10.400 8.700" fill="none" stroke="#4a4a4f" stroke-width="1.200" stroke-linecap="round" stroke-linejoin="round"></path><path d="M0.400 12.700H4.400M6.400 12.700H12" stroke="#4a4a4f" stroke-width="1.200"></path></svg>
<!-- right-edge icon (clipped) -->
<svg style="left:955px;top:141px" width="12" height="13" viewBox="0 0 12 13"><path d="M1 1H11V8H6L3.500 12V8H1z" fill="none" stroke="#4a4a4f" stroke-width="1.300" stroke-linejoin="round"></path></svg>
<!-- watch expressions -->
<div class="a" style="left:677px;top:162px;width:285px;height:24.300px;background:#f9f9fa"></div>
<svg style="left:684px;top:171.500px" width="8" height="6" viewBox="0 0 8 6"><path d="M0.200 0.300H7.800L4 5.700z" fill="#8c8c90"></path></svg>
<div class="t" style="left: 697.4px; top: 168.6px; font-size: 12.3px; color: rgb(42, 42, 46); letter-spacing: 0.11px;">Watch expressions</div>
<div class="a" style="left:955px;top:173.600px;width:9px;height:1.300px;background:#4a4a4f"></div>
<div class="a" style="left:960.600px;top:168.600px;width:1.300px;height:11px;background:#4a4a4f"></div>
<div class="a" style="left:677px;top:186.200px;width:285px;height:1px;background:#e4e4e6"></div>
<div class="t" style="left: 697.4px; top: 196.3px; font-size: 12px; font-style: italic; color: rgb(180, 180, 182); letter-spacing: -0.18px;">Add watch expression</div>
<!-- breakpoints -->
<div class="a" style="left:677px;top:215.500px;width:285px;height:25.500px;background:#f9f9fa;border-top:1px solid #e4e4e6;border-bottom:1px solid #e4e4e6"></div>
<svg style="left:684px;top:225.500px" width="8" height="6" viewBox="0 0 8 6"><path d="M0.200 0.300H7.800L4 5.700z" fill="#8c8c90"></path></svg>
<div class="t" style="left: 697.4px; top: 222.8px; font-size: 12.3px; color: rgb(42, 42, 46); letter-spacing: 0.088px;">Breakpoints</div>
<div class="a" style="left:697.400px;top:249.500px;width:12px;height:12px;border:1px solid #b1b1b3;border-radius:2.500px;background:#fff"></div>
<div class="t" style="left: 714.4px; top: 250.2px; font-size: 12px; color: rgb(42, 42, 46); letter-spacing: -0.275px;">Pause on exceptions</div>
<!-- xhr -->
<div class="a" style="left:677px;top:269px;width:285px;height:26px;background:#f9f9fa;border-top:1px solid #e4e4e6;border-bottom:1px solid #e4e4e6"></div>
<svg style="left:684px;top:279.500px" width="8" height="6" viewBox="0 0 8 6"><path d="M0.200 0.300H7.800L4 5.700z" fill="#8c8c90"></path></svg>
<div class="t" style="left: 697.4px; top: 276.3px; font-size: 12.3px; color: rgb(42, 42, 46); letter-spacing: -0.002px;">XHR Breakpoints</div>
<div class="a" style="left:955px;top:281.600px;width:9px;height:1.300px;background:#4a4a4f"></div>
<div class="a" style="left:960.600px;top:276.600px;width:1.300px;height:11px;background:#4a4a4f"></div>
<div class="a" style="left:697.400px;top:303.500px;width:12px;height:12px;border:1px solid #b1b1b3;border-radius:2.500px;background:#fff"></div>
<div class="t" style="left: 714.4px; top: 304.2px; font-size: 12px; color: rgb(42, 42, 46); letter-spacing: -0.496px;">Pause on any URL</div>
<div class="a" style="left:677px;top:323px;width:285px;height:1px;background:#e4e4e6"></div>
<div class="t" style="left: 698px; top: 333.8px; font-size: 12px; font-style: italic; color: rgb(180, 180, 182); letter-spacing: -0.245px;">Break when URL contains</div>
<!-- footer icon -->
<svg style="left:954.700px;top:421px" width="14" height="14" viewBox="0 0 14 14"><circle cx="7" cy="7" r="6" fill="none" stroke="#2a2a2e" stroke-width="1.300"></circle><path d="M7 3.500V7.500" stroke="#2a2a2e" stroke-width="1.300"></path></svg>

<!-- ============ CONSOLE ============ -->
<div class="a" style="left:0;top:438.500px;width:962px;height:1.800px;background:#dadadc"></div>
<div class="a" style="left:0;top:441px;width:962px;height:28px;background:#fff"></div>
<!-- trash -->
<svg style="left:12px;top:446.500px" width="14" height="17" viewBox="0 0 14 17"><path d="M1 3.800H13" stroke="#1c1c1e" stroke-width="1.600" stroke-linecap="round"></path><path d="M4.800 3.500V2.300A1.300 1.300 0 0 1 6.100 1H7.900A1.300 1.300 0 0 1 9.200 2.300V3.500" fill="none" stroke="#1c1c1e" stroke-width="1.400"></path><path d="M2.200 4.500V14A2 2 0 0 0 4.200 16H9.800A2 2 0 0 0 11.800 14V4.500" fill="none" stroke="#1c1c1e" stroke-width="1.600"></path><path d="M4.700 6.500V13.500M7 6.500V13.500M9.300 6.500V13.500" stroke="#1c1c1e" stroke-width="1"></path></svg>
<div class="a" style="left:33.500px;top:447px;width:1px;height:16px;background:#dedee0"></div>
<svg style="left:44.500px;top:450px" width="11" height="10" viewBox="0 0 11 10"><path d="M0.700 0.700H10.300L6.700 5V9.300L4.300 8V5z" fill="none" stroke="#737373" stroke-width="1" stroke-linejoin="round"></path></svg>
<div class="t" style="left: 59.2px; top: 449.2px; font-size: 12px; color: rgb(138, 138, 142); letter-spacing: -0.006px;">Filter output</div>
<div class="a" style="left:860.500px;top:449px;width:12px;height:12px;border:1px solid #b1b1b3;border-radius:2.500px;background:#fff"></div>
<div class="t" style="left: 876.2px; top: 449.2px; font-size: 12px; color: rgb(42, 42, 46); letter-spacing: -0.253px;">Persist Logs</div>
<div class="a" style="left:945px;top:441px;width:17px;height:28px;background:#f9f9fa"></div>
<svg style="left:956.500px;top:450px" width="10" height="10" viewBox="0 0 10 10"><path d="M0.600 0.600L9.400 9.400M9.400 0.600L0.600 9.400" stroke="#2a2a2e" stroke-width="1.300" fill="none"></path></svg>
<!-- filter buttons -->
<div class="a" style="left:0;top:468.500px;width:962px;height:25px;background:#f9f9fa;border-top:1px solid #e4e4e6;border-bottom:1px solid #e4e4e6"></div>
<div class="a" style="left:5.300px;top:474.200px;width:41.500px;height:13.500px;background:#0a7df0;border-radius:2px"></div>
<div class="t" style="left: 10.3px; top: 475.2px; font-size: 12.3px; color: rgb(255, 255, 255); letter-spacing: -0.381px;">Errors</div>
<div class="a" style="left:49px;top:474.200px;width:58.600px;height:13.500px;background:#0a7df0;border-radius:2px"></div>
<div class="t" style="left: 53.6px; top: 475.2px; font-size: 12.3px; color: rgb(255, 255, 255); letter-spacing: -0.348px;">Warnings</div>
<div class="a" style="left:109.800px;top:474.200px;width:34.600px;height:13.500px;background:#0a7df0;border-radius:2px"></div>
<div class="t" style="left: 114.7px; top: 475.2px; font-size: 12.3px; color: rgb(255, 255, 255); letter-spacing: -0.493px;">Logs</div>
<div class="a" style="left:146.900px;top:474.200px;width:29.300px;height:13.500px;background:#0a7df0;border-radius:2px"></div>
<div class="t" style="left: 151.5px; top: 475.2px; font-size: 12.3px; color: rgb(255, 255, 255); letter-spacing: -0.279px;">Info</div>
<div class="a" style="left:178px;top:474.200px;width:44.600px;height:13.500px;background:#0a7df0;border-radius:2px"></div>
<div class="t" style="left: 183.3px; top: 475.2px; font-size: 12.3px; color: rgb(255, 255, 255); letter-spacing: -0.45px;">Debug</div>
<div class="a" style="left:229px;top:473px;width:1px;height:16px;background:#dedee0"></div>
<div class="a" style="left:235.600px;top:474.200px;width:31.800px;height:13.500px;background:#ededf0;border-radius:2px"></div>
<div class="t" style="left: 240.9px; top: 475.2px; font-size: 12.3px; color: rgb(42, 42, 46); letter-spacing: -1.366px;">CSS</div>
<div class="a" style="left:269.900px;top:474.200px;width:32.100px;height:13.500px;background:#ededf0;border-radius:2px"></div>
<div class="t" style="left: 274.9px; top: 475.2px; font-size: 12.3px; color: rgb(42, 42, 46); letter-spacing: -1.29px;">XHR</div>
<div class="a" style="left:304.800px;top:474.200px;width:57.700px;height:13.500px;background:#ededf0;border-radius:2px"></div>
<div class="t" style="left: 309.8px; top: 475.2px; font-size: 12.3px; color: rgb(42, 42, 46); letter-spacing: -0.532px;">Requests</div>
<!-- prompt -->
<svg style="left:12.500px;top:502px" width="12" height="10" viewBox="0 0 12 10"><path d="M1 0.800L5 5L1 9.200M6.500 0.800L10.500 5L6.500 9.200" fill="none" stroke="#737378" stroke-width="1.200" stroke-linecap="round" stroke-linejoin="round"></path></svg>


</div></div>


</body></html>
